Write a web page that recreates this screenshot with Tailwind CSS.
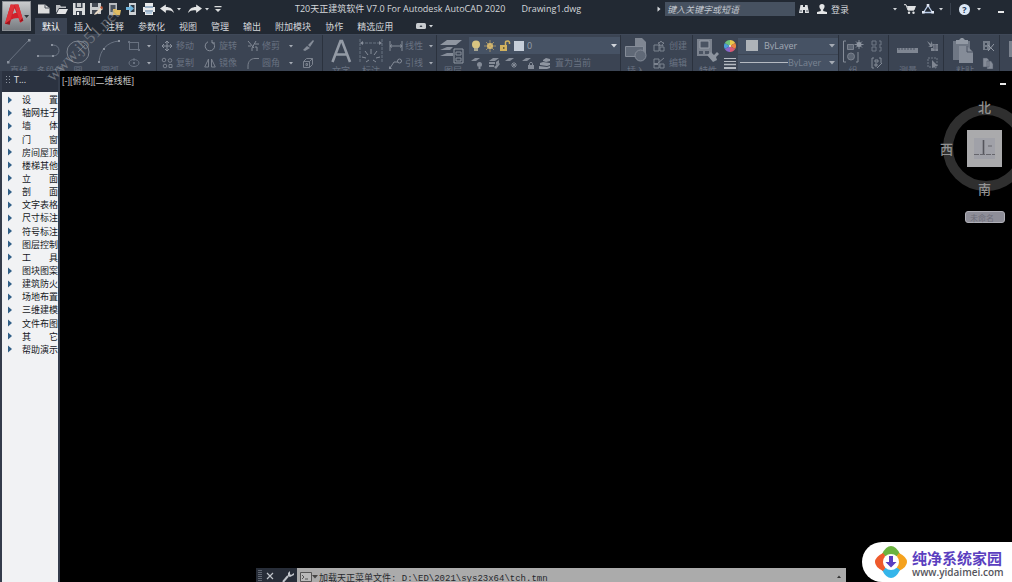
<!DOCTYPE html>
<html lang="zh-CN">
<head>
<meta charset="utf-8">
<title>T20天正建筑软件 V7.0 - Drawing1.dwg</title>
<script src="https://cdn.jsdelivr.net/npm/@tailwindcss/browser@4"></script>
</head>
<body class="relative flex h-screen flex-col overflow-hidden bg-black font-['Open_Sans','Noto_Sans_CJK_SC',sans-serif] text-[9px] leading-none text-[#d4d7db]">

<svg class="hidden" aria-hidden="true">
  <symbol id="dot" viewBox="0 0 6 4"><path d="M1 1h4L3 3.4z" fill="currentColor"/></symbol>
  <symbol id="down" viewBox="0 0 8 6"><path d="M1 1h6L4 4.6z" fill="currentColor"/></symbol>
  <symbol id="tri" viewBox="0 0 4 8"><path d="M0 0.5L4 4L0 7.5z" fill="currentColor"/></symbol>
</svg>

<header class="flex h-[34px] shrink-0 bg-[#222933]">
  <button aria-label="应用程序菜单" class="relative z-10 ml-0.5 mt-px flex h-[30px] w-[29px] shrink-0 items-center border border-[#8b8f94] bg-linear-to-b from-[#c9cbcd] to-[#777b80]">
    <svg class="h-7 w-7" viewBox="0 0 28 28">
      <path d="M2 22L8 2h8l5 17-3 2-2-5c-4 0-6 1-8 2l-1 3zM10 12c2-1 3-1 4-1l-2-5z" fill="#d0202a"/>
      <path d="M8 2L2 22l5-2 5-17zM12 2h4l5 17-4-1z" fill="#de3239"/>
      <path d="M2 22l5 1 1-5zM17 20l4-1-1-3z" fill="#9a141c"/>
      <path d="M22 13h5l-2.500 3z" fill="#30353b"/>
    </svg>
  </button>
  <div class="flex min-w-0 flex-1 flex-col">
    <div class="flex h-[18px] items-center">
      <div class="flex w-[264px] shrink-0 items-center pl-1.5">
        <button aria-label="新建" class="flex w-[18px] justify-start"><svg class="h-3 w-3.5" viewBox="0 0 14 12"><path d="M1 1.500h7l4.500 3.500v5.500h-11.500z" fill="#dcdddd"/><path d="M8 1.500v3.500h4.500" fill="none" stroke="#4a5059"/></svg></button>
        <button aria-label="打开" class="flex w-[17px]"><svg class="h-3 w-3.5" viewBox="0 0 14 12"><path d="M1 10V2h4l1 1.500h5V5H4z" fill="#b9bcbf"/><path d="M1.500 11L4 6h9l-2.500 5z" fill="#e4e5e6"/></svg></button>
        <button aria-label="保存" class="flex w-[17px]"><svg class="h-3.5 w-3.5" viewBox="0 0 14 14"><path d="M1 1h12v12H1z" fill="#d9dbdc"/><path d="M3.500 1h7v5h-7zM4 9h6v4H4z" fill="#39404b"/><path d="M5 1h4v4H5z" fill="#c5c8ca"/><path d="M5 10h2v3H5z" fill="#eee"/></svg></button>
        <button aria-label="另存为" class="flex w-[18px]"><svg class="h-3.5 w-3.5" viewBox="0 0 14 14"><path d="M1 1h11v11H1z" fill="#c9cbcd"/><path d="M3 1h6v4H3zM3 8h6v4H3z" fill="#444a54"/><path d="M6 11l6-6 2 2-6 5-3 1z" fill="#e8dcc9"/><path d="M11 5l2-1 1 2-1.500 1.500z" fill="#c05a3a"/></svg></button>
        <button aria-label="从 Web 和 Mobile 打开" class="flex w-[18px]"><svg class="h-3.5 w-3.5" viewBox="0 0 14 14"><path d="M2 1h8v12H2z" fill="#b9bcc0"/><path d="M3.500 3h5v7h-5z" fill="#4a525e"/><path d="M6 7h3l1 1h4l-1 5H6z" fill="#e2bd62"/></svg></button>
        <button aria-label="保存到 Web 和 Mobile" class="flex w-[17px]"><svg class="h-3.5 w-3.5" viewBox="0 0 14 14"><path d="M4 1h7v12H4z" fill="#cfd2d5"/><path d="M5.500 3h4v7h-4z" fill="#2f3a47"/><path d="M1 5h4V3l4 3.500L5 10V8H1z" fill="#6fb4dc"/></svg></button>
        <button aria-label="打印" class="flex w-[18px]"><svg class="h-3.5 w-3.5" viewBox="0 0 14 14"><path d="M3 1h8v4H3zM1 5h12v5H1zM3 9h8v4H3z" fill="#e9eaeb"/><path d="M3 5h8M3 9h8" stroke="#4f79a0"/><path d="M4 11h6" stroke="#7aa7cf"/></svg></button>
        <button aria-label="放弃" class="flex w-4"><svg class="h-3 w-3.5" viewBox="0 0 12 12" preserveAspectRatio="none"><path d="M0 5.500L5 1.500v2.500c4 0 6 2 7 6-2-2.500-4-3-7-2.500v2.500z" fill="#e4e5e6"/></svg></button>
        <svg class="mr-1.5 h-1 w-1.5" ><use href="#dot"/></svg>
        <button aria-label="重做" class="flex w-4"><svg class="h-3 w-3.5" viewBox="0 0 12 12" preserveAspectRatio="none"><path d="M12 5.500L7 1.500v2.500c-4 0-6 2-7 6 2-2.500 4-3 7-2.500v2.500z" fill="#e4e5e6"/></svg></button>
        <svg class="mr-1 h-1 w-1.5"><use href="#dot"/></svg>
        <button aria-label="自定义快速访问工具栏" class="flex"><svg class="h-2 w-2" viewBox="0 0 8 8"><path d="M0.500 1h7v1.200h-7zM1 4h6L4 7z" fill="#d9dbdc"/></svg></button>
      </div>
      <h1 class="shrink-0 whitespace-pre pb-0.5">T20天正建筑软件 V7.0 For Autodesk AutoCAD 2020</h1>
      <span class="ml-4 flex-1 whitespace-nowrap pb-0.5">Drawing1.dwg</span>
      <svg class="mr-1 h-1.5 w-1"><use href="#tri"/></svg>
      <input type="text" aria-label="搜索" placeholder="键入关键字或短语" class="h-[14px] w-[130px] shrink-0 bg-[#465160] px-0.5 italic placeholder:text-[#c3c8cf]">
      <div class="flex w-[217px] shrink-0 items-center pl-1">
        <button aria-label="查找" class="mr-2"><svg class="h-2.5 w-2.5" viewBox="0 0 10 10"><path d="M1.500 1h2.500v2h2V1h2.500L10 9H6V6H4v3H0z" fill="#dfe1e3"/><path d="M1 7h2M7 7h2" stroke="#4c5560"/></svg></button>
        <button class="flex items-center gap-1"><svg class="h-2.5 w-2.5" viewBox="0 0 10 10"><path d="M5 0c3.500 0 3 4 1.200 5.500V7L10 8v2H0V8l3.800-1V5.500C2 4 1.500 0 5 0z" fill="#e4e5e6"/></svg>登录</button>
        <svg class="ml-auto mr-1.5 h-1 w-1.5"><use href="#dot"/></svg>
        <button aria-label="应用商店" class="mr-1.5"><svg class="h-2.5 w-3" viewBox="0 0 12 10"><path d="M0 0.700h2l2 5.500h6" fill="none" stroke="#dfe1e3"/><path d="M3 2h9l-1.500 4H4z" fill="#dfe1e3"/><circle cx="5" cy="8.700" r="1.200" fill="#dfe1e3"/><circle cx="9.500" cy="8.700" r="1.200" fill="#dfe1e3"/></svg></button>
        <button aria-label="Autodesk" class="mr-1"><svg class="h-2.5 w-3" viewBox="0 0 12 10"><path d="M6 1.500L10.500 8.500H1.500z" fill="none" stroke="#b9cbe8" stroke-width="1.300"/><path d="M4.700 0h2.600v2.600H4.700zM0 7h2.600v2.600H0zM9.400 7H12v2.600H9.400z" fill="#e3e9f4"/></svg></button>
        <svg class="mr-1.5 h-1 w-1.5"><use href="#dot"/></svg>
        <span class="mr-2 h-3 w-px bg-[#39414d]"></span>
        <button aria-label="帮助" class="mr-1.5 flex h-[11px] w-[11px] items-center justify-center rounded-full bg-[#dce8f5] font-bold text-[#1f3a5c]">?</button>
        <svg class="mr-4 h-1 w-1.5"><use href="#dot"/></svg>
        <button aria-label="最小化" class="mr-2 mt-1.5 h-0.5 w-1.5 bg-[#e8e9ea]"></button>
      </div>
    </div>
    <nav class="flex h-4 items-stretch whitespace-nowrap pl-1">
      <a href="#" class="bg-[#3b4453] px-[7px] pt-0.5 text-white leading-[14px]">默认</a>
      <a href="#" class="px-[7px] pt-0.5 leading-[14px]">插入</a>
      <a href="#" class="px-[7px] pt-0.5 leading-[14px]">注释</a>
      <a href="#" class="px-[7px] pt-0.5 leading-[14px]">参数化</a>
      <a href="#" class="px-[7px] pt-0.5 leading-[14px]">视图</a>
      <a href="#" class="px-[7px] pt-0.5 leading-[14px]">管理</a>
      <a href="#" class="px-[7px] pt-0.5 leading-[14px]">输出</a>
      <a href="#" class="px-[7px] pt-0.5 leading-[14px]">附加模块</a>
      <a href="#" class="px-[7px] pt-0.5 leading-[14px]">协作</a>
      <a href="#" class="px-[7px] pt-0.5 leading-[14px]">精选应用</a>
      <button aria-label="功能区显示" class="ml-4 flex items-center gap-0.5"><svg class="h-1.5 w-2.5" viewBox="0 0 10 6"><rect width="10" height="6" rx="1.500" fill="#c9ccd0"/><path d="M3.500 4L5 2l1.500 2z" fill="#39404b"/></svg><svg class="h-1 w-1.5"><use href="#dot"/></svg></button>
    </nav>
  </div>
</header>

<!-- ribbon -->
<section aria-label="功能区" class="flex h-[37px] shrink-0 overflow-hidden border-t border-[#3f4858] bg-[#3b4453] pl-0.5 text-[#697281]">
  <!-- draw -->
  <div class="flex w-[155px] shrink-0 border-r border-[#2b323e] whitespace-nowrap">
    <button class="ml-1 flex w-[26px] flex-col items-center"><svg class="h-[31px] w-[26px] shrink-0" viewBox="0 0 26 31"><path d="M2 27L23 5" stroke="currentColor"/><path d="M1 26h2.500v2.500H1zM22 4h2.500v2.500H22z" fill="#8a919d"/></svg>直线</button>
    <button class="ml-1 flex w-7 flex-col items-center"><svg class="h-[31px] w-7 shrink-0" viewBox="0 0 28 31"><path d="M2 21h15c8 0 8-11 0-11" fill="none" stroke="currentColor"/><path d="M1 20h2v2H1zM16 20h2v2h-2zM15 9h2v2h-2z" fill="#8a919d"/></svg>多段线</button>
    <button class="ml-0.5 flex w-6 flex-col items-center"><svg class="h-[31px] w-6 shrink-0" viewBox="0 0 24 31"><circle cx="12" cy="17" r="11" fill="none" stroke="#7b828d"/><path d="M12 17l7-7" stroke="currentColor"/></svg>圆</button>
    <button class="ml-1.5 flex w-7 flex-col items-center"><svg class="h-[31px] w-7 shrink-0" viewBox="0 0 28 31"><path d="M3 27C4 15 11 7 23 6" fill="none" stroke="currentColor"/><path d="M2 26h2v2H2zM7 13h2v2H7zM22 5h2v2h-2z" fill="#8a919d"/></svg>圆弧</button>
    <div class="ml-0.5 grid grid-rows-[17px_17px] pt-0.5">
      <button aria-label="矩形" class="flex items-center gap-1.5 pl-0.5"><svg class="h-3 w-3" viewBox="0 0 12 12"><rect x="1.500" y="2.500" width="9" height="7" fill="none" stroke="currentColor"/><path d="M0 1h2v2H0zM10 9h2v2h-2z" fill="currentColor"/></svg><svg class="h-1 w-1.5 text-[#a5abb4]"><use href="#dot"/></svg></button>
      <button aria-label="椭圆" class="flex items-center gap-1.5 pl-0.5"><svg class="h-3 w-3" viewBox="0 0 12 12"><ellipse cx="6" cy="6" rx="5" ry="3.500" fill="none" stroke="currentColor"/><path d="M5 5h2v2H5zM5 1.500h2v2H5z" fill="currentColor"/></svg><svg class="h-1 w-1.5 text-[#a5abb4]"><use href="#dot"/></svg></button>
    </div>
  </div>
  <!-- modify -->
  <div class="grid w-[166px] shrink-0 grid-cols-[43px_43px_55px_16px] grid-rows-[17px_17px] border-r border-[#2b323e] pl-1 pt-0.5 whitespace-nowrap">
    <button class="flex items-center gap-[3px]"><svg class="h-3 w-3" viewBox="0 0 12 12"><path d="M6 1v10M1 6h10M4 3l2-2 2 2M4 9l2 2 2-2M3 4L1 6l2 2M9 4l2 2-2 2" fill="none" stroke="#8a919d"/></svg>移动</button>
    <button class="flex items-center gap-[3px]"><svg class="h-3 w-3" viewBox="0 0 12 12"><path d="M8.500 2.200A4.700 4.700 0 1 1 4 1.800M8 0v3h3" fill="none" stroke="#858c98"/></svg>旋转</button>
    <button class="flex items-center gap-[3px]"><svg class="h-3 w-3" viewBox="0 0 12 12"><path d="M1 1l6 7M9 1L5 8v3M1 6h3M8 4h4M8 7h2v4" fill="none" stroke="#858c98"/></svg>修剪<svg class="ml-[5px] h-1 w-1.5 text-[#a5abb4]"><use href="#dot"/></svg></button>
    <button aria-label="删除"><svg class="h-3 w-3" viewBox="0 0 12 12"><path d="M11 0L6 5l2 2 4-6zM5 6L1 10l2 1 5-3z" fill="#858c98"/></svg></button>
    <button class="flex items-center gap-[3px]"><svg class="h-3 w-3" viewBox="0 0 12 12"><circle cx="3" cy="3" r="1.800" fill="none" stroke="#7b828e"/><circle cx="9" cy="3.500" r="1.800" fill="none" stroke="#7b828e"/><circle cx="4" cy="9" r="1.800" fill="none" stroke="#7b828e"/><path d="M8 7.500h3v3H8z" fill="none" stroke="#7b828e"/></svg>复制</button>
    <button class="flex items-center gap-[3px]"><svg class="h-3 w-3" viewBox="0 0 12 12"><path d="M4.500 2v8H0.700zM7.500 2v8h3.800z" fill="none" stroke="#7b828e"/></svg>镜像</button>
    <button class="flex items-center gap-[3px]"><svg class="h-3 w-3" viewBox="0 0 12 12"><path d="M1 12V9c0-5 3-7.500 7-7.500h4" fill="none" stroke="#7b828e"/></svg>圆角<svg class="ml-[5px] h-1 w-1.5 text-[#a5abb4]"><use href="#dot"/></svg></button>
    <button aria-label="分解"><svg class="h-3 w-3" viewBox="0 0 12 12"><path d="M1.500 4.500h6v6h-6zM1.500 4.500l3-3h6l-3 3M10.500 1.500v6l-3 3M4 6.500h1.500v2H4z" fill="none" stroke="#7b828e"/></svg></button>
  </div>
  <!-- annotation -->
  <div class="flex w-[114px] shrink-0 border-r border-[#2b323e] whitespace-nowrap">
    <button class="ml-1.5 flex w-6 flex-col items-center"><svg class="h-[31px] w-6 shrink-0" viewBox="0 0 24 31"><path d="M3.500 27L11.500 6h1.500L21 27M7 19.500h10.500" fill="none" stroke="#939aa5" stroke-width="2.600"/></svg>文字</button>
    <button class="ml-1 flex w-7 flex-col items-center"><svg class="h-[31px] w-7 shrink-0" viewBox="0 0 28 31"><path d="M3 4v24M25 4v24M4 8h20" fill="none" stroke="currentColor" stroke-dasharray="3 1"/><path d="M3 8l3-2v4zM25 8l-3-2v4z" fill="#868d99"/><path d="M14 14v5M8 16l3 4M20 16l-3 4M5 22l4 1M23 22l-4 1M9 27l3-2M19 27l-3-2" stroke="#868d99"/></svg>标注</button>
    <div class="ml-1 grid grid-rows-[17px_17px] pt-0.5">
      <button class="flex items-center gap-0.5"><svg class="h-3 w-3.5" viewBox="0 0 14 12"><path d="M1 1v10M13 1v10M1 6h12M3 4.500L1 6l2 1.500M11 4.500L13 6l-2 1.500" fill="none" stroke="#858c98"/></svg>线性<svg class="ml-[3px] h-1 w-1.5 text-[#a5abb4]"><use href="#dot"/></svg></button>
      <button class="flex items-center gap-0.5"><svg class="h-3 w-3.5" viewBox="0 0 14 12"><path d="M1 11l4-6h4" fill="none" stroke="#858c98"/><circle cx="10.500" cy="4" r="2" fill="none" stroke="#858c98"/><path d="M0 9l3 3H0z" fill="#858c98"/></svg>引线<svg class="ml-[3px] h-1 w-1.5 text-[#a5abb4]"><use href="#dot"/></svg></button>
    </div>
  </div>
  <!-- layers -->
  <div class="flex w-[184px] shrink-0 border-r border-[#2b323e] whitespace-nowrap">
    <button class="ml-0.5 flex w-7 flex-col items-center"><svg class="h-[31px] w-7 shrink-0" viewBox="0 0 28 31"><path d="M8 5h15l-6 5H1z" fill="#8f96a1"/><path d="M8 12h6l-3 3H1zM8 18h6v3H1z" fill="#868d99"/><path d="M15 14h9v14h-9z" fill="#3b4453" stroke="#9299a4"/><path d="M17 17h5v3h-5zM17 23h5v3h-5z" fill="none" stroke="#868d99"/></svg>图层</button>
    <div class="grid flex-1 grid-rows-[17px_17px] pl-0.5 pt-0.5">
      <div class="flex items-center gap-[3px] bg-[#465264] pl-0.5">
        <svg class="h-3 w-2.5" viewBox="0 0 10 12"><circle cx="5" cy="4.500" r="4" fill="#d8c481"/><path d="M3 8h4v3H3z" fill="#a9a791"/></svg>
        <svg class="h-3 w-3" viewBox="0 0 12 12"><circle cx="6" cy="6" r="3" fill="#e0c06f"/><path d="M6 0v12M0 6h12M2 2l8 8M10 2l-8 8" stroke="#c1a86a" stroke-width="0.700"/></svg>
        <svg class="h-3 w-3" viewBox="0 0 12 12"><path d="M1 5h7v6H1z" fill="#d2b25f"/><path d="M6.500 5V2.500c0-2 4-2 4 0V4" fill="none" stroke="#d2b25f" stroke-width="1.500"/><path d="M4 7h1.500v2H4z" fill="#6d6036"/></svg>
        <span class="h-2.5 w-2.5 bg-[#c6ced9]"></span>
        <select aria-label="图层" class="h-[15px] min-w-0 flex-1 appearance-none bg-transparent text-[#98a1ae]"><option>0</option></select>
        <svg class="mr-0.5 h-1.5 w-2 text-[#d0d4da]"><use href="#down"/></svg>
      </div>
      <div class="flex items-center gap-[5px] pl-0.5">
        <button aria-label="关闭图层" class="shrink-0"><svg class="h-3 w-3" viewBox="0 0 12 12"><path d="M0 4l4-3h5L5 4z" fill="#858c98"/><circle cx="8.500" cy="7.500" r="2.500" fill="#858c98"/><path d="M7.500 10h2v2h-2z" fill="#858c98"/></svg></button>
        <button aria-label="隔离图层" class="shrink-0"><svg class="h-3 w-3" viewBox="0 0 12 12"><path d="M1 4l4-3h6L7 4zM1 5h6v2H1zM1 8h5v2H1zM8 5l3-2v3L8 8zM6 10l2 2 4-5-1-1z" fill="#858c98"/></svg></button>
        <button aria-label="冻结图层" class="shrink-0"><svg class="h-3 w-3" viewBox="0 0 12 12"><path d="M0 4l4-3h5L5 4z" fill="#858c98"/><path d="M9 5v6M6 8h6M7 6l4 4M11 6l-4 4" stroke="#858c98"/></svg></button>
        <button aria-label="锁定图层" class="shrink-0"><svg class="h-3 w-3" viewBox="0 0 12 12"><path d="M0 4l4-3h5L5 4zM6 8h6v4H6z" fill="#858c98"/><path d="M7.500 8V6.500c0-1.500 3-1.500 3 0V8" fill="none" stroke="#858c98"/></svg></button>
        <button class="flex shrink-0 items-center gap-1"><svg class="h-3 w-3" viewBox="0 0 12 12"><path d="M4 3l3-2 4 1v2l-4 1-3-1zM1 6l3-1 7 1v2l-3 1-7-1zM0 9l8 1 3-1v2l-3 1H0z" fill="#8f96a1"/></svg>置为当前</button>
      </div>
    </div>
  </div>
  <!-- block -->
  <div class="flex w-[72px] shrink-0 border-r border-[#2b323e] whitespace-nowrap">
    <button class="ml-0.5 flex w-[26px] flex-col items-center"><svg class="h-[31px] w-[26px] shrink-0" viewBox="0 0 26 31"><path d="M12 3h7l4 4v12H12z" fill="#7f8692"/><path d="M2.500 11.500h18v10h-18z" fill="#606977" stroke="#858c98"/><circle cx="17.500" cy="20.500" r="5.500" fill="#606977" stroke="#858c98"/></svg>插入</button>
    <div class="ml-1 grid grid-rows-[17px_17px] pt-0.5">
      <button class="flex items-center gap-1"><svg class="h-3 w-3" viewBox="0 0 12 12"><path d="M1 5h5v6H1zM7 7h4v4H7zM8 1l1 1.500 2 .5-1.500 1.500L10 6 8 5 6 6l.5-2L5 3l2-.5z" fill="none" stroke="#7d8490"/></svg>创建</button>
      <button class="flex items-center gap-1"><svg class="h-3 w-3" viewBox="0 0 12 12"><path d="M1 2h5v9H1zM7 7h4v4H7zM5 6l6-5" fill="none" stroke="#7d8490"/><path d="M1 6h4v2H1z" fill="#7d8490"/></svg>编辑</button>
    </div>
  </div>
  <!-- properties -->
  <div class="flex w-[146px] shrink-0 border-r border-[#2b323e] whitespace-nowrap">
    <button class="ml-0.5 flex w-[26px] flex-col items-center"><svg class="h-[31px] w-[26px] shrink-0" viewBox="0 0 26 31"><path d="M2 4h15v17H2z" fill="#7b828e"/><path d="M5 6h9v7H5z" fill="#4a5362" stroke="#9aa0aa"/><path d="M4 16h4v3H4zM10 16h4v3h-4z" fill="#4a5362"/><path d="M12 20l4-3 3 3 3-3 2 2-3 3 1 3-4 2z" fill="#8d949f"/></svg>特性</button>
    <div class="grid flex-1 grid-cols-[17px_1fr] grid-rows-[17px_17px] items-center pt-0.5">
      <svg class="h-3 w-3 justify-self-center" viewBox="0 0 12 12"><path d="M6 6V0a6 6 0 0 1 5.200 3z" fill="#e9c84b"/><path d="M6 6l5.200-3a6 6 0 0 1 0 6z" fill="#e98443"/><path d="M6 6l5.200 3A6 6 0 0 1 6 12z" fill="#d85a76"/><path d="M6 6v6a6 6 0 0 1-5.200-3z" fill="#8b66c9"/><path d="M6 6L.8 9a6 6 0 0 1 0-6z" fill="#4b9bd8"/><path d="M6 6L.8 3A6 6 0 0 1 6 0z" fill="#6fc27a"/><circle cx="6" cy="6" r="1" fill="#eee"/></svg>
      <div class="flex h-4 items-center bg-[#465264] pl-2">
        <span class="h-[11px] w-3 bg-[#aeb3b8]"></span>
        <select aria-label="颜色" class="ml-1.5 h-[15px] min-w-0 flex-1 appearance-none bg-transparent text-[#a2a9b4]"><option>ByLayer</option></select>
        <svg class="mr-0.5 h-1.5 w-2 text-[#a5abb4]"><use href="#down"/></svg>
      </div>
      <svg class="h-3 w-3 justify-self-center" viewBox="0 0 12 12"><path d="M0 1.500h12M0 4.500h12" stroke="#b5bac2"/><path d="M0 7.500h12" stroke="#b5bac2" stroke-width="1.500"/><path d="M0 11h12" stroke="#b5bac2" stroke-width="2"/></svg>
      <div class="flex h-4 items-center bg-[#465264] pl-0.5">
        <span class="h-px w-12 bg-[#b5bac2]"></span>
        <select aria-label="线宽" class="h-[15px] min-w-0 flex-1 appearance-none bg-transparent text-[#7a8493]"><option>ByLayer</option></select>
        <svg class="mr-0.5 h-1.5 w-2 text-[#a5abb4]"><use href="#down"/></svg>
      </div>
    </div>
  </div>
  <!-- groups -->
  <div class="flex w-[50px] shrink-0 border-r border-[#2b323e] whitespace-nowrap">
    <button class="ml-0.5 flex w-6 flex-col items-center"><svg class="h-[31px] w-6 shrink-0" viewBox="0 0 24 31"><path d="M5 6H2.500v21H5M15 27h2V17" fill="none" stroke="#858c98"/><path d="M6.500 9.500h6v5h-6z" fill="#5d6674" stroke="#7b828e"/><circle cx="10" cy="21.500" r="3.500" fill="#5d6674" stroke="#7b828e"/><path d="M18 5v9M13.500 9.500h9M15 6.500l6 6M21 6.500l-6 6" stroke="#858c98"/><circle cx="18" cy="9.500" r="2.500" fill="#8f96a1"/></svg>组</button>
    <div class="ml-1.5 grid grid-rows-[17px_17px] items-center pt-0.5">
      <button aria-label="解除编组"><svg class="h-3 w-3" viewBox="0 0 12 12"><path d="M1 1h4v4H1zM1 7h4v4H1zM8 1h2v4H8M8 7h2v4H8" fill="none" stroke="#717986"/></svg></button>
      <button aria-label="组编辑"><svg class="h-3 w-3" viewBox="0 0 12 12"><path d="M3 1H1v10h2M8 1h2v5M4 3h3v2H4zM4 7h2v2H4zM6 11l5-5" fill="none" stroke="#858c98"/></svg></button>
    </div>
  </div>
  <!-- utilities -->
  <div class="flex w-[55px] shrink-0 border-r border-[#2b323e] whitespace-nowrap">
    <button class="ml-1.5 flex w-[26px] flex-col items-center"><svg class="h-[31px] w-[26px] shrink-0" viewBox="0 0 26 31"><path d="M2 13h21v5H2z" fill="#7f8692"/><path d="M4 13v2M7 13v2M10 13v2M13 13v2M16 13v2M19 13v2" stroke="#4a5362"/></svg>测量</button>
    <div class="ml-1.5 grid grid-rows-[17px_17px] items-center pt-0.5">
      <button aria-label="快速选择"><svg class="h-3 w-3" viewBox="0 0 12 12"><path d="M0 1l4 3V1l2 4-1 2H1l2-1zM6 4h5v7H4V8h2z" fill="#7f8692"/><path d="M6 6h5M6 8h5M8 4v7" stroke="#4a5362" stroke-width="0.600"/></svg></button>
      <button aria-label="全部选择"><svg class="h-3 w-3" viewBox="0 0 12 12"><path d="M1 1h9v9H1z" fill="none" stroke="#717986" stroke-dasharray="2 1"/><path d="M5 3l6 6H8l1 3-2-2-2 1z" fill="#7f8692"/></svg></button>
    </div>
  </div>
  <!-- clipboard -->
  <div class="flex w-[56px] shrink-0 border-r border-[#2b323e] whitespace-nowrap">
    <button class="ml-2 flex w-[26px] flex-col items-center"><svg class="h-[31px] w-[26px] shrink-0" viewBox="0 0 26 31"><path d="M1 6h17v19H1z" fill="#6f7784"/><path d="M4 5h3l2-2h2l2 2h3v4H4z" fill="#9299a4"/><path d="M7 11h8l6 6v11H7z" fill="#858c98"/><path d="M15 11v6h6" fill="none" stroke="#4a5362"/></svg>粘贴</button>
    <div class="ml-1 grid grid-rows-[17px_17px] items-center pt-0.5">
      <button aria-label="剪切"><svg class="h-3 w-3" viewBox="0 0 12 12"><path d="M1 1h7v9H1z" fill="#757d89"/><path d="M3 3h2v2H3zM3 7h2v2H3z" fill="#3b4453"/><path d="M6 5l6 6M12 4L6 11" stroke="#9299a4"/></svg></button>
      <button aria-label="复制剪裁"><svg class="h-3 w-3" viewBox="0 0 12 12"><path d="M1 1h4l2 2v7H1zM5 4h4l2 3v5H5z" fill="#858c98" stroke="#4a5362" stroke-width="0.500"/></svg></button>
    </div>
  </div>
  <!-- view -->
  <div class="w-[30px] shrink-0 pl-[9px] pt-1"><svg class="h-5 w-5" viewBox="0 0 20 20"><path d="M0 2h18v16H0z" fill="#7b828e"/></svg></div>
</section>

<div class="flex min-h-0 flex-1">
  <!-- tool palette -->
  <aside class="flex w-[60px] shrink-0 flex-col border-x-2 border-[#343c4b] bg-[#f1f2f4] text-[#15181d]">
    <div class="flex h-[21px] shrink-0 items-center gap-1 bg-[#2b3240] pb-1 pl-1 text-[#e0e2e6]">
      <svg class="h-2 w-1" viewBox="0 0 4 8"><path d="M0 .5h1M3 .5h1M0 3.500h1M3 3.500h1M0 6.500h1M3 6.500h1" stroke="#8d94a0"/></svg>T...
    </div>
    <ul class="mt-px grid h-[263px] auto-rows-fr whitespace-pre font-['Noto_Sans_CJK_SC',sans-serif]">
      <li class="flex items-center gap-[10px] pl-1.5"><svg class="h-2 w-1 text-[#315f87]"><use href="#tri"/></svg><a href="#">设　　置</a></li>
      <li class="flex items-center gap-[10px] pl-1.5"><svg class="h-2 w-1 text-[#315f87]"><use href="#tri"/></svg><a href="#">轴网柱子</a></li>
      <li class="flex items-center gap-[10px] pl-1.5"><svg class="h-2 w-1 text-[#315f87]"><use href="#tri"/></svg><a href="#">墙　　体</a></li>
      <li class="flex items-center gap-[10px] pl-1.5"><svg class="h-2 w-1 text-[#315f87]"><use href="#tri"/></svg><a href="#">门　　窗</a></li>
      <li class="flex items-center gap-[10px] pl-1.5"><svg class="h-2 w-1 text-[#315f87]"><use href="#tri"/></svg><a href="#">房间屋顶</a></li>
      <li class="flex items-center gap-[10px] pl-1.5"><svg class="h-2 w-1 text-[#315f87]"><use href="#tri"/></svg><a href="#">楼梯其他</a></li>
      <li class="flex items-center gap-[10px] pl-1.5"><svg class="h-2 w-1 text-[#315f87]"><use href="#tri"/></svg><a href="#">立　　面</a></li>
      <li class="flex items-center gap-[10px] pl-1.5"><svg class="h-2 w-1 text-[#315f87]"><use href="#tri"/></svg><a href="#">剖　　面</a></li>
      <li class="flex items-center gap-[10px] pl-1.5"><svg class="h-2 w-1 text-[#315f87]"><use href="#tri"/></svg><a href="#">文字表格</a></li>
      <li class="flex items-center gap-[10px] pl-1.5"><svg class="h-2 w-1 text-[#315f87]"><use href="#tri"/></svg><a href="#">尺寸标注</a></li>
      <li class="flex items-center gap-[10px] pl-1.5"><svg class="h-2 w-1 text-[#315f87]"><use href="#tri"/></svg><a href="#">符号标注</a></li>
      <li class="flex items-center gap-[10px] pl-1.5"><svg class="h-2 w-1 text-[#315f87]"><use href="#tri"/></svg><a href="#">图层控制</a></li>
      <li class="flex items-center gap-[10px] pl-1.5"><svg class="h-2 w-1 text-[#315f87]"><use href="#tri"/></svg><a href="#">工　　具</a></li>
      <li class="flex items-center gap-[10px] pl-1.5"><svg class="h-2 w-1 text-[#315f87]"><use href="#tri"/></svg><a href="#">图块图案</a></li>
      <li class="flex items-center gap-[10px] pl-1.5"><svg class="h-2 w-1 text-[#315f87]"><use href="#tri"/></svg><a href="#">建筑防火</a></li>
      <li class="flex items-center gap-[10px] pl-1.5"><svg class="h-2 w-1 text-[#315f87]"><use href="#tri"/></svg><a href="#">场地布置</a></li>
      <li class="flex items-center gap-[10px] pl-1.5"><svg class="h-2 w-1 text-[#315f87]"><use href="#tri"/></svg><a href="#">三维建模</a></li>
      <li class="flex items-center gap-[10px] pl-1.5"><svg class="h-2 w-1 text-[#315f87]"><use href="#tri"/></svg><a href="#">文件布图</a></li>
      <li class="flex items-center gap-[10px] pl-1.5"><svg class="h-2 w-1 text-[#315f87]"><use href="#tri"/></svg><a href="#">其　　它</a></li>
      <li class="flex items-center gap-[10px] pl-1.5"><svg class="h-2 w-1 text-[#315f87]"><use href="#tri"/></svg><a href="#">帮助演示</a></li>
    </ul>
  </aside>

  <main class="flex min-w-0 flex-1 flex-col overflow-hidden">
    <div class="flex justify-between pl-0.5 pr-1.5 pt-1 text-[#c4c4c4]">
      <button class="font-['Liberation_Sans','Noto_Sans_CJK_SC',sans-serif] leading-[12px]">[-][俯视][二维线框]</button>
      <button aria-label="最小化视口" class="mt-2 h-0.5 w-1.5 bg-[#e8e8e8]"></button>
    </div>
    <!-- view cube -->
    <div class="flex justify-end pt-3">
      <div class="flex w-[76px] flex-col">
        <div class="relative h-[98px] w-[94px] text-[13px] font-medium text-[#929292]">
          <svg class="absolute left-0 top-0 h-[98px] w-[94px]" viewBox="0 0 94 98"><circle cx="50" cy="49" r="38" fill="none" stroke="#2f2f2f" stroke-width="10"/></svg>
          <span class="absolute left-[42px] top-0.5">北</span>
          <span class="absolute left-1 top-11">西</span>
          <span class="absolute left-[42px] top-[84px]">南</span>
          <button aria-label="上" class="absolute left-[31px] top-[31px] flex h-[37px] w-[35px] items-center justify-center bg-[#aaaaac]"><svg class="h-[23px] w-[23px]" viewBox="0 0 23 23"><path d="M1 1h21v21H1z" fill="#a0a1a8"/><path d="M10.500 3v14" stroke="#55555c" stroke-width="1.600"/><path d="M1 17.500h21M15 9h4" stroke="#66666c" stroke-dasharray="5 1"/></svg></button>
        </div>
        <button class="ml-[29px] mt-3.5 h-3 w-10 rounded-[3px] border border-[#b0b0b8] bg-[#8e8e98] text-left text-[8px] leading-[9px] text-[#6f6f7b]"><span class="pl-1">未命名</span></button>
      </div>
    </div>
    <!-- command line -->
    <div class="mt-auto flex h-3.5 pl-[196px] pr-[166px]">
      <div class="flex w-[41px] shrink-0 items-center bg-[#272d38] pl-0.5 pt-0.5">
        <svg class="h-3 w-1" viewBox="0 0 4 12"><path d="M1 0v12M3 0v12" stroke="#9aa0aa" stroke-dasharray="1 1"/></svg>
        <button aria-label="关闭" class="ml-1"><svg class="h-2 w-2" viewBox="0 0 8 8"><path d="M1 1l6 6M7 1L1 7" stroke="#c0c4ca" stroke-width="1.200"/></svg></button>
        <button aria-label="自定义" class="ml-2"><svg class="h-3 w-3" viewBox="0 0 12 12"><path d="M1 12l5-6" stroke="#c0c4ca" stroke-width="2"/><path d="M8 1L6 3v3l2 1 4-2V3L9 5 8 4z" fill="#c0c4ca"/></svg></button>
      </div>
      <div class="flex min-w-0 flex-1 items-center bg-[#ababab] pl-[3px] pr-1 pt-1 font-['Liberation_Mono','Noto_Sans_CJK_SC',monospace] text-[#25272b]">
        <svg class="h-2.5 w-3" viewBox="0 0 12 10"><path d="M.5 .5h11v9H.5z" fill="#b9b9b9" stroke="#555"/><path d="M2 3l2 2-2 2M5 7h3" fill="none" stroke="#555"/></svg>
        <svg class="mr-px h-1.5 w-1.5 text-[#444]" viewBox="0 0 6 4"><path d="M0 0h6L3 3.500z" fill="currentColor"/></svg>
        <input type="text" aria-label="命令行" value="加载天正菜单文件: D:\ED\2021\sys23x64\tch.tmn" class="h-3 min-w-0 flex-1">
        <svg class="h-1.5 w-1.5" viewBox="0 0 6 6"><path d="M1 4h4L3 1.500z" fill="#333"/></svg>
      </div>
    </div>
  </main>
</div>

<!-- diagonal watermark -->
<div class="pointer-events-none absolute left-[33px] top-[37px] z-20 w-[100px] -rotate-45 text-center font-['Liberation_Serif',serif] text-[17px] leading-4 text-[#a0a3a8]/55">www.jb51.net</div>

<!-- site badge -->
<a href="#" class="absolute bottom-0 right-0 z-20 flex h-10 w-[150px] items-center gap-1 rounded-l-full bg-white pl-3">
  <svg class="h-[34px] w-[34px] shrink-0" viewBox="0 0 34 34">
    <path d="M8 9Q12 1 17 1t9 8l-4 3H12z" fill="#6cb33f"/>
    <path d="M25 8q8 4 8 9t-8 9l-3-4V12z" fill="#f5a21d"/>
    <path d="M26 25q-4 8-9 8t-9-8l4-3h10z" fill="#35b5ea"/>
    <path d="M9 26q-8-4-8-9t8-9l3 4v10z" fill="#ee5a2c"/>
    <circle cx="17" cy="17" r="8" fill="#fff"/>
    <path d="M15 11h4v6h3.500L17 22.500 11.500 17H15z" fill="#5a3fc0"/>
  </svg>
  <span class="flex flex-col whitespace-nowrap"><span class="font-['Noto_Sans_CJK_SC',sans-serif] text-[15px] font-bold leading-[19px] text-[#5b3fbf]">纯净系统家园</span><span class="text-[10px] font-semibold leading-[10px] text-[#55555c]">www.yidaimei.com</span></span>
</a>
</body>
</html>
